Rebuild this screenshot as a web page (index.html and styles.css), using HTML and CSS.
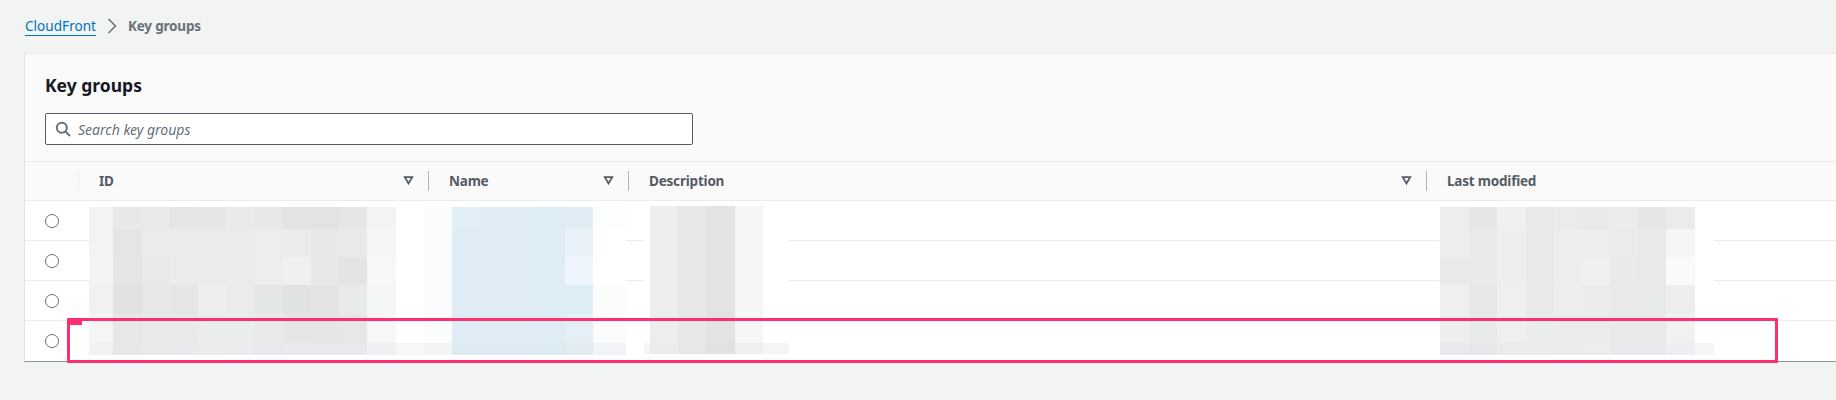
FILE: index.html
```html
<!DOCTYPE html>
<html lang="en" dir="ltr">
  <head>
    <meta charset="utf-8">
    <link rel="stylesheet" href="styles.css">
    <title>Key groups</title>
  </head>
  <body>
    <nav class="breadcrumb">
      <a class="crumb-link" href="#">CloudFront</a>
      <svg class="crumb-sep" width="10" height="16" viewBox="0 0 10 16"><path d="M1.5 1l7 7-7 7" fill="none" stroke="#687078" stroke-width="1.5"/></svg>
      <span class="crumb-current">Key groups</span>
    </nav>

    <section class="card">
      <div class="card-head">
        <h1>Key groups</h1>
        <label class="search">
          <svg width="16" height="16" viewBox="0 0 16 16"><circle cx="6.8" cy="6.8" r="5" fill="none" stroke="#687078" stroke-width="2"/><path d="M10.5 10.5l4.5 4.5" stroke="#687078" stroke-width="2"/></svg>
          <input type="text" placeholder="Search key groups">
        </label>
      </div>

      <table>
        <colgroup>
          <col class="col-select">
          <col class="col-id">
          <col class="col-name">
          <col class="col-desc">
          <col>
        </colgroup>
        <tr>
          <th></th>
          <th><div class="th-in th-first">ID <svg class="filter" width="11" height="9" viewBox="0 0 11 9"><path d="M1.8 1.2h7.4L5.5 7.4z" fill="none" stroke="#545b64" stroke-width="1.8"/></svg></div></th>
          <th><div class="th-in">Name <svg class="filter" width="11" height="9" viewBox="0 0 11 9"><path d="M1.8 1.2h7.4L5.5 7.4z" fill="none" stroke="#545b64" stroke-width="1.8"/></svg></div></th>
          <th><div class="th-in">Description <svg class="filter" width="11" height="9" viewBox="0 0 11 9"><path d="M1.8 1.2h7.4L5.5 7.4z" fill="none" stroke="#545b64" stroke-width="1.8"/></svg></div></th>
          <th><div class="th-in">Last modified</div></th>
        </tr>
        <tr><td><span class="radio"></span></td><td></td><td></td><td></td><td></td></tr>
        <tr><td><span class="radio"></span></td><td></td><td></td><td></td><td></td></tr>
        <tr><td><span class="radio"></span></td><td></td><td></td><td></td><td></td></tr>
        <tr><td><span class="radio"></span></td><td></td><td></td><td></td><td></td></tr>
      </table>
    </section>

    <!-- redacted cell contents, page coordinates -->
    <svg class="mosaic" width="1836" height="400" viewBox="0 0 1836 400">
      <rect x="89" y="207" width="537" height="148" fill="#fff"/>
      <rect x="644" y="206" width="145" height="148" fill="#fff"/>
      <rect x="1439" y="207" width="275" height="148" fill="#fff"/>

      <g id="id-col">
        <g transform="translate(0 207)">
          <rect x="89" width="24" height="22" fill="#f3f3f3"/><rect x="113" width="29" height="22" fill="#e8e8e8"/><rect x="142" width="28" height="22" fill="#e9e9e9"/><rect x="170" width="28" height="22" fill="#e5e5e5"/><rect x="198" width="28" height="22" fill="#e6e6e6"/><rect x="226" width="28" height="22" fill="#e9eaeb"/><rect x="254" width="29" height="22" fill="#e8e8e8"/><rect x="283" width="56" height="22" fill="#e3e3e3"/><rect x="339" width="28" height="22" fill="#e6e6e6"/><rect x="367" width="29" height="22" fill="#f3f3f3"/>
        </g>
        <g transform="translate(0 229)">
          <rect x="89" width="24" height="28" fill="#f3f3f3"/><rect x="113" width="29" height="28" fill="#e5e5e5"/><rect x="142" width="28" height="28" fill="#ebebeb"/><rect x="170" width="28" height="28" fill="#ebebeb"/><rect x="198" width="28" height="28" fill="#eaebeb"/><rect x="226" width="28" height="28" fill="#ebebeb"/><rect x="254" width="29" height="28" fill="#eceded"/><rect x="283" width="28" height="28" fill="#ebebeb"/><rect x="311" width="28" height="28" fill="#e8e8e8"/><rect x="339" width="28" height="28" fill="#e8e9e9"/><rect x="367" width="29" height="28" fill="#f5f6f6"/>
        </g>
        <g transform="translate(0 257)">
          <rect x="89" width="24" height="28" fill="#f4f4f4"/><rect x="113" width="29" height="28" fill="#e5e5e5"/><rect x="142" width="28" height="28" fill="#e9e9e9"/><rect x="170" width="84" height="28" fill="#ebebeb"/><rect x="254" width="29" height="28" fill="#ededed"/><rect x="283" width="28" height="28" fill="#f0f0f0"/><rect x="311" width="28" height="28" fill="#e8e8e8"/><rect x="339" width="28" height="28" fill="#e4e4e4"/><rect x="367" width="29" height="28" fill="#f6f7f7"/>
        </g>
        <g transform="translate(0 285)">
          <rect x="89" width="24" height="29" fill="#f1f1f1"/><rect x="113" width="29" height="29" fill="#e2e2e2"/><rect x="142" width="28" height="29" fill="#e7e7e7"/><rect x="170" width="28" height="29" fill="#e5e5e5"/><rect x="198" width="28" height="29" fill="#eeeeee"/><rect x="226" width="28" height="29" fill="#ebebeb"/><rect x="254" width="29" height="29" fill="#e5e6e7"/><rect x="283" width="28" height="29" fill="#e1e2e3"/><rect x="311" width="28" height="29" fill="#e4e4e4"/><rect x="339" width="28" height="29" fill="#e9eaea"/><rect x="367" width="29" height="29" fill="#f5f6f6"/>
        </g>
        <g transform="translate(0 314)">
          <rect x="89" width="24" height="29" fill="#f5f5f5"/><rect x="113" width="29" height="29" fill="#e7e7e7"/><rect x="142" width="56" height="29" fill="#e9e9e9"/><rect x="198" width="56" height="29" fill="#ebeded"/><rect x="254" width="29" height="29" fill="#e9e9e9"/><rect x="283" width="28" height="29" fill="#e6e6e6"/><rect x="311" width="28" height="29" fill="#e5e5e5"/><rect x="339" width="28" height="29" fill="#e7e7e7"/><rect x="367" width="29" height="29" fill="#f7f7f7"/>
        </g>
        <g transform="translate(0 343)">
          <rect x="89" width="24" height="12" fill="#f1f2f2"/><rect x="113" width="29" height="12" fill="#e6e7e8"/><rect x="142" width="28" height="12" fill="#e9eaea"/><rect x="170" width="28" height="12" fill="#e9eaeb"/><rect x="198" width="28" height="12" fill="#ebecec"/><rect x="226" width="28" height="12" fill="#ebecee"/><rect x="254" width="29" height="12" fill="#e8e9eb"/><rect x="283" width="84" height="12" fill="#e9eaeb"/><rect x="367" width="29" height="12" fill="#eff0f2"/><rect x="396" width="28" height="12" fill="#f7f7f7"/>
        </g>
      </g>

      <g id="name-col">
        <rect x="424" y="207" width="28" height="136" fill="#fafcfe"/>
        <rect x="452" y="207" width="28" height="22" fill="#e2eff7"/>
        <rect x="452" y="229" width="28" height="114" fill="#dfecf5"/>
        <rect x="480" y="207" width="57" height="136" fill="#e0edf5"/>
        <rect x="537" y="207" width="28" height="136" fill="#deecf5"/>
        <rect x="565" y="207" width="28" height="22" fill="#e0edf5"/>
        <rect x="565" y="229" width="28" height="28" fill="#e8f1f8"/>
        <rect x="565" y="257" width="28" height="28" fill="#eff5fc"/>
        <rect x="565" y="285" width="28" height="29" fill="#deecf5"/>
        <rect x="565" y="314" width="28" height="29" fill="#e5f0f6"/>
        <rect x="593" y="207" width="33" height="22" fill="#fdfdfd"/>
        <rect x="593" y="285" width="33" height="58" fill="#fcfcfc"/>
        <rect x="424" y="343" width="28" height="12" fill="#f3f4f4"/>
        <rect x="452" y="343" width="28" height="12" fill="#ddeaf1"/>
        <rect x="480" y="343" width="57" height="12" fill="#dfeaf2"/>
        <rect x="537" y="343" width="28" height="12" fill="#dceaf2"/>
        <rect x="565" y="343" width="28" height="12" fill="#e3ebf2"/>
        <rect x="593" y="343" width="33" height="12" fill="#f2f3f4"/>
      </g>

      <g id="desc-col">
        <rect x="650" y="206" width="28" height="137" fill="#ecedec"/>
        <rect x="678" y="206" width="28" height="137" fill="#e8e8e8"/>
        <rect x="706" y="206" width="29" height="137" fill="#e3e3e3"/>
        <rect x="735" y="206" width="28" height="137" fill="#f6f6f6"/>
        <rect x="644" y="343" width="6" height="11" fill="#f4f5f5"/>
        <rect x="650" y="343" width="28" height="11" fill="#eaebeb"/>
        <rect x="678" y="343" width="28" height="11" fill="#e7e7e7"/>
        <rect x="706" y="343" width="29" height="11" fill="#e0e1e1"/>
        <rect x="735" y="343" width="28" height="11" fill="#eef0ef"/>
        <rect x="763" y="343" width="26" height="11" fill="#f4f6f5"/>
      </g>

      <g id="modified-col">
        <g transform="translate(0 207)">
          <rect x="1440" width="29" height="22" fill="#eceeed"/><rect x="1469" width="28" height="22" fill="#e6e6e6"/><rect x="1497" width="29" height="22" fill="#f0f0f0"/><rect x="1526" width="28" height="22" fill="#e9e9e9"/><rect x="1554" width="28" height="22" fill="#ebebeb"/><rect x="1582" width="28" height="22" fill="#eaeaea"/><rect x="1610" width="28" height="22" fill="#ececec"/><rect x="1638" width="28" height="22" fill="#e6e6e6"/><rect x="1666" width="29" height="22" fill="#ebebeb"/>
        </g>
        <g transform="translate(0 229)">
          <rect x="1440" width="29" height="28" fill="#eeeeee"/><rect x="1469" width="28" height="28" fill="#e9ebea"/><rect x="1497" width="29" height="28" fill="#eeeeee"/><rect x="1526" width="28" height="28" fill="#e9e9e9"/><rect x="1554" width="56" height="28" fill="#eceeed"/><rect x="1610" width="28" height="28" fill="#ebebeb"/><rect x="1638" width="28" height="28" fill="#e9e9e9"/><rect x="1666" width="29" height="28" fill="#f5f5f5"/>
        </g>
        <g transform="translate(0 257)">
          <rect x="1440" width="29" height="28" fill="#e9e9e9"/><rect x="1469" width="28" height="28" fill="#e9ebea"/><rect x="1497" width="29" height="28" fill="#eeeeee"/><rect x="1526" width="28" height="28" fill="#e9e9e9"/><rect x="1554" width="28" height="28" fill="#ededed"/><rect x="1582" width="28" height="28" fill="#f0f0f0"/><rect x="1610" width="28" height="28" fill="#e9ebea"/><rect x="1638" width="28" height="28" fill="#e9e9e9"/><rect x="1666" width="29" height="28" fill="#fafafa"/>
        </g>
        <g transform="translate(0 285)">
          <rect x="1440" width="29" height="29" fill="#efefef"/><rect x="1469" width="28" height="29" fill="#e6e8e7"/><rect x="1497" width="29" height="29" fill="#efefef"/><rect x="1526" width="28" height="29" fill="#e9e9e9"/><rect x="1554" width="28" height="29" fill="#eeeeee"/><rect x="1582" width="28" height="29" fill="#ececec"/><rect x="1610" width="28" height="29" fill="#e9e9e9"/><rect x="1638" width="28" height="29" fill="#e8eaea"/><rect x="1666" width="29" height="29" fill="#ededed"/>
        </g>
        <g transform="translate(0 314)">
          <rect x="1440" width="29" height="29" fill="#eeeeee"/><rect x="1469" width="28" height="29" fill="#e8eaea"/><rect x="1497" width="29" height="29" fill="#efefef"/><rect x="1526" width="28" height="29" fill="#ebeded"/><rect x="1554" width="56" height="29" fill="#ebebeb"/><rect x="1610" width="56" height="29" fill="#e9e9e9"/><rect x="1666" width="29" height="29" fill="#f1f1f1"/>
        </g>
        <g transform="translate(0 343)">
          <rect x="1440" width="29" height="12" fill="#e8e9ec"/><rect x="1469" width="28" height="12" fill="#e5e7e9"/><rect x="1497" width="29" height="12" fill="#eaecec"/><rect x="1526" width="28" height="12" fill="#ebecec"/><rect x="1554" width="28" height="12" fill="#ebeced"/><rect x="1582" width="28" height="12" fill="#ecedec"/><rect x="1610" width="56" height="12" fill="#e9eaed"/><rect x="1666" width="29" height="12" fill="#eceef1"/><rect x="1695" width="19" height="12" fill="#f5f7f7"/>
        </g>
      </g>
    </svg>

    <!-- annotation drawn on the screenshot -->
    <div class="highlight"><span class="highlight-tab"></span></div>
  </body>
</html>
```

FILE: styles.css
```css
* {
  box-sizing: border-box;
}
body {
  position: relative;
  margin: 0;
  height: 400px;
  overflow: hidden;
  background: #f2f3f3;
  font-family: "Noto Sans", sans-serif;
  font-size: 14px;
  color: #16191f;
}

.breadcrumb {
  display: flex;
  align-items: flex-start;
  height: 53px;
  padding: 16px 0 0 25px;
  font-size: 13.6px;
  line-height: 20px;
}
.crumb-link {
  height: 20px;
  color: #0073bb;
  text-decoration: none;
  border-bottom: 1px solid #0073bb;
}
.crumb-sep {
  margin: 2px 11px 0 11px;
}
.crumb-current {
  font-size: 13.5px;
  letter-spacing: -0.2px;
  font-weight: 700;
  color: #687078;
}

.card {
  margin-left: 24px;
  height: 309px;
  background: #fff;
  border-left: 1px solid #dfe3e3;
  border-top: 1px solid #eaeded;
  border-bottom: 1px solid #879596;
}
.card-head {
  height: 107px;
  padding: 20px 0 0 20px;
  background: #fafafa;
}
.card-head h1 {
  margin: 0 0 16px;
  font-size: 17.5px;
  line-height: 23px;
  font-weight: 700;
}
.search {
  display: flex;
  align-items: center;
  gap: 7px;
  width: 648px;
  height: 32px;
  padding-left: 9px;
  background: #fff;
  border: 1px solid #545b64;
  border-radius: 2px;
}
.search input {
  flex: 1;
  border: 0;
  outline: 0;
  padding: 0;
  font: italic 14px "Noto Sans", sans-serif;
}
.search input::placeholder {
  color: #687078;
  opacity: 1;
}

table {
  width: 100%;
  table-layout: fixed;
  border-collapse: separate;
  border-spacing: 0;
}
.col-select {
  width: 53px;
}
.col-id {
  width: 350px;
}
.col-name {
  width: 200px;
}
.col-desc {
  width: 798px;
}
th {
  height: 40px;
  padding: 0;
  background: #fafafa;
  border-top: 1px solid #eaeded;
  border-bottom: 1px solid #eaeded;
  font-size: 13.5px;
  letter-spacing: -0.2px;
  text-align: left;
  color: #545b64;
}
.th-in {
  display: flex;
  align-items: center;
  justify-content: space-between;
  height: 20px;
  padding: 0 14px 1px 20px;
  border-left: 1px solid #aab7b8;
}
.th-first {
  border-left-color: #eaeded;
}
td {
  height: 40px;
  padding: 0 0 0 20px;
  border-bottom: 1px solid #eaeded;
  vertical-align: middle;
}
tr:last-child td {
  border-bottom: 0;
}
.radio {
  display: block;
  width: 14px;
  height: 14px;
  border: 1.5px solid #687078;
  border-radius: 50%;
  background: #fff;
}

.mosaic {
  position: absolute;
  left: 0;
  top: 0;
}
.highlight {
  position: absolute;
  left: 67px;
  top: 318px;
  width: 1711px;
  height: 45px;
  border: 3px solid #ff2e6f;
  border-radius: 1px;
}
.highlight-tab {
  position: absolute;
  left: 0;
  top: -2px;
  width: 12px;
  height: 6px;
  background: #ff2e6f;
}
```
